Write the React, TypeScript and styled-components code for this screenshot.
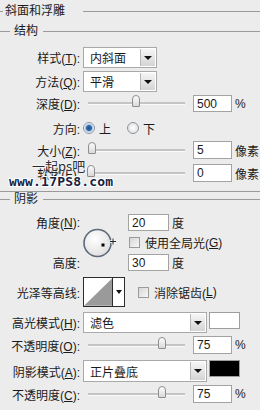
import React from 'react'
import styled, { createGlobalStyle } from 'styled-components'

const GlobalStyle = createGlobalStyle`
  html, body {
    margin: 0;
    padding: 0;
    background: #ececec;
  }
  body {
    font-family: 'Liberation Sans', 'Noto Sans CJK SC', sans-serif;
    font-size: 12px;
    color: #1a1a1a;
  }
`

const Panel = styled.div`
  position: relative;
  width: 260px;
  height: 410px;
  overflow: hidden;
  background: #ececec;
`

const Legend = styled.div<{ $h: number; $lead: number; $gap: number }>`
  display: flex;
  align-items: center;
  height: ${p => p.$h}px;
  line-height: 1;
  white-space: nowrap;
  &::before {
    content: '';
    width: ${p => p.$lead}px;
    border-top: 1px solid #9a9a9a;
    margin-right: ${p => (p.$lead > 5 ? 4 : 2)}px;
  }
  &::after {
    content: '';
    flex: 1;
    border-top: 1px solid #9a9a9a;
    margin-left: ${p => p.$gap}px;
  }
`

const Separator = styled.div`
  height: 18px;
  box-sizing: border-box;
  border-bottom: 1px solid #9a9a9a;
  margin-bottom: -8px;
  position: relative;
  top: -8px;
`

const Row = styled.div<{ $h: number; $mt: number }>`
  display: flex;
  align-items: center;
  height: ${p => p.$h}px;
  margin-top: ${p => p.$mt}px;
  white-space: nowrap;
`

const Label = styled.span`
  flex: none;
  width: 80px;
  margin-right: 3px;
  text-align: right;
`

const U = styled.span`
  text-decoration: underline;
`

const Select = styled.div<{ $w: number }>`
  display: flex;
  width: ${p => p.$w}px;
  height: 100%;
  box-sizing: border-box;
  border: 1px solid #a9a9a9;
  background: #fff;
`

const SelectText = styled.span`
  flex: 1;
  display: flex;
  align-items: center;
  padding-left: 6px;
`

const DropButton = styled.span`
  width: 14px;
  margin: 1px;
  border-left: 1px solid #b9b9b9;
  background: linear-gradient(#f6f6f6, #d4d4d4);
  display: flex;
  align-items: center;
  justify-content: center;
  &::after {
    content: '';
    border-left: 4px solid transparent;
    border-right: 4px solid transparent;
    border-top: 4px solid #111;
  }
`

const Swatch = styled.span<{ $color: string }>`
  align-self: flex-start;
  width: 31px;
  height: 17px;
  margin-left: 2px;
  box-sizing: border-box;
  border: 1px solid #9e9e9e;
  background: ${p => p.$color};
`

const NumBox = styled.span<{ $w?: number; $ml?: number }>`
  display: flex;
  align-items: center;
  width: ${p => p.$w ?? 39}px;
  height: 100%;
  margin-left: ${p => p.$ml ?? 0}px;
  padding-left: 3px;
  box-sizing: border-box;
  border: 1px solid #a3a3a3;
  background: #fff;
`

const Unit = styled.span`
  margin-left: 3px;
`

const Track = styled.div`
  position: relative;
  width: 97px;
  height: 2px;
  margin-left: 5px;
  margin-right: 8px;
  background: #c4c4c4;
  border-bottom: 1px solid #fafafa;
`

const Thumb = styled.span`
  position: absolute;
  top: -7px;
  width: 8px;
  height: 12px;
  margin-left: -4px;
  box-sizing: border-box;
  border: 1px solid #8e8e8e;
  border-radius: 4px 4px 1px 1px;
  background: linear-gradient(#fdfdfd, #d9d9d9);
`

const Radio = styled.span<{ $on?: boolean }>`
  width: 12px;
  height: 12px;
  border-radius: 50%;
  box-sizing: border-box;
  border: 1px solid #8a96a3;
  background: ${p =>
    p.$on
      ? 'radial-gradient(circle, #1f4f8a 0, #2f6bb0 2.5px, #a9c3e0 3.5px, #f4f6f8 5px)'
      : 'radial-gradient(circle, #ffffff 0, #e3e3e3 5px)'};
`

const RadioText = styled.span<{ $mr?: number }>`
  margin-left: 4px;
  margin-right: ${p => p.$mr ?? 0}px;
`

const Check = styled.span<{ $ml?: number }>`
  flex: none;
  width: 11px;
  height: 11px;
  margin-left: ${p => p.$ml ?? 0}px;
  margin-right: 5px;
  box-sizing: border-box;
  border: 1px solid #9b9b9b;
  background: linear-gradient(135deg, #d6d6d6, #f8f8f8);
`

const AngleGrid = styled.div`
  display: grid;
  grid-template-columns: 80px 42px auto;
  grid-template-rows: 17px 23px 17px;
  column-gap: 3px;
  margin-top: 8px;
  white-space: nowrap;
  & > span {
    display: flex;
    align-items: center;
  }
`

const GridLabel = styled.span`
  justify-content: flex-end;
`

const Dial = styled.div`
  grid-column: 2;
  grid-row: 1 / span 3;
  align-self: center;
  height: 30px;
`

const Contour = styled.div`
  display: flex;
  width: 42px;
  height: 100%;
  box-sizing: border-box;
  border: 1px solid #2b2b2b;
  background: #fff;
`

const ContourArrow = styled.span`
  width: 11px;
  border-left: 1px solid #2b2b2b;
  display: flex;
  align-items: center;
  justify-content: center;
  &::after {
    content: '';
    border-left: 3px solid transparent;
    border-right: 3px solid transparent;
    border-top: 4px solid #111;
  }
`

const Watermark = styled.div<{ $x: number; $y: number }>`
  position: absolute;
  left: ${p => p.$x}px;
  top: ${p => p.$y}px;
  white-space: nowrap;
  line-height: 1;
`

const MarkCn = styled.span`
  font-family: 'Noto Sans CJK SC', sans-serif;
  font-size: 13px;
  color: #2a2a2a;
  text-shadow: 0 0 2px #fff, 0 0 2px #fff;
`

const MarkUrl = styled.span`
  font-family: 'DejaVu Sans Mono', monospace;
  font-weight: bold;
  font-size: 13px;
  letter-spacing: 0.2px;
  color: #17223f;
  text-shadow: 1px 1px 0 #fff, -1px -1px 0 #fff, 1px -1px 0 #fff, -1px 1px 0 #fff;
`

const Slider = ({ pos }: { pos: number }) => (
  <Track>
    <Thumb style={{ left: `${pos}%` }} />
  </Track>
)

const App = () => {
  return (
    <Panel>
      <GlobalStyle />
      <Legend $h={22} $lead={3} $gap={18}>斜面和浮雕</Legend>
      <Legend $h={18} $lead={10} $gap={5}>结构</Legend>

      <Row $h={21} $mt={7}>
        <Label>样式(<U>T</U>):</Label>
        <Select $w={74}>
          <SelectText>内斜面</SelectText>
          <DropButton />
        </Select>
      </Row>
      <Row $h={21} $mt={3}>
        <Label>方法(<U>Q</U>):</Label>
        <Select $w={74}>
          <SelectText>平滑</SelectText>
          <DropButton />
        </Select>
      </Row>
      <Row $h={17} $mt={3}>
        <Label>深度(<U>D</U>):</Label>
        <Slider pos={49} />
        <NumBox>500</NumBox>
        <Unit>%</Unit>
      </Row>
      <Row $h={18} $mt={7}>
        <Label>方向:</Label>
        <Radio $on />
        <RadioText $mr={16}>上</RadioText>
        <Radio />
        <RadioText>下</RadioText>
      </Row>
      <Row $h={18} $mt={4}>
        <Label>大小(<U>Z</U>):</Label>
        <Slider pos={4} />
        <NumBox>5</NumBox>
        <Unit>像素</Unit>
      </Row>
      <Row $h={18} $mt={5}>
        <Label>软化(<U>F</U>):</Label>
        <Slider pos={3} />
        <NumBox>0</NumBox>
        <Unit>像素</Unit>
      </Row>
      <Separator />

      <Legend $h={14} $lead={10} $gap={5}>阴影</Legend>

      <AngleGrid>
        <GridLabel>角度(<U>N</U>):</GridLabel>
        <Dial>
          <svg width="36" height="30" viewBox="0 0 36 30">
            <defs>
              <radialGradient id="dialFill" cx="40%" cy="35%" r="70%">
                <stop offset="0" stopColor="#ffffff" />
                <stop offset="1" stopColor="#dedede" />
              </radialGradient>
            </defs>
            <circle cx="14.5" cy="15" r="13.5" fill="url(#dialFill)" stroke="#5d6878" strokeWidth="1.6" />
            <rect x="18.5" y="15.5" width="3" height="3" fill="#000" />
            <path d="M30 10.5v6M27 13.5h6" stroke="#fff" strokeWidth="2.6" />
            <path d="M30 10.5v6M27 13.5h6" stroke="#222" strokeWidth="1" />
          </svg>
        </Dial>
        <span>
          <NumBox $w={41} style={{ height: 17 }}>20</NumBox>
          <Unit>度</Unit>
        </span>
        <span style={{ gridColumn: 3 }}>
          <Check $ml={1} />
          使用全局光(<U>G</U>)
        </span>
        <GridLabel>高度:</GridLabel>
        <span style={{ gridColumn: 3 }}>
          <NumBox $w={41} style={{ height: 17 }}>30</NumBox>
          <Unit>度</Unit>
        </span>
      </AngleGrid>

      <Row $h={30} $mt={6}>
        <Label>光泽等高线:</Label>
        <Contour>
          <svg width="29" height="28" viewBox="0 0 29 28">
            <polygon points="0,28 29,0 29,28" fill="#9a9a9a" />
          </svg>
          <ContourArrow />
        </Contour>
        <Check $ml={13} />
        消除锯齿(<U>L</U>)
      </Row>

      <Row $h={21} $mt={5}>
        <Label>高光模式(<U>H</U>):</Label>
        <Select $w={124}>
          <SelectText>滤色</SelectText>
          <DropButton />
        </Select>
        <Swatch $color="#ffffff" />
      </Row>
      <Row $h={18} $mt={3}>
        <Label>不透明度(<U>O</U>):</Label>
        <Slider pos={76} />
        <NumBox>75</NumBox>
        <Unit>%</Unit>
      </Row>
      <Row $h={22} $mt={6}>
        <Label>阴影模式(<U>A</U>):</Label>
        <Select $w={124}>
          <SelectText>正片叠底</SelectText>
          <DropButton />
        </Select>
        <Swatch $color="#000000" />
      </Row>
      <Row $h={18} $mt={3}>
        <Label>不透明度(<U>C</U>):</Label>
        <Slider pos={76} />
        <NumBox>75</NumBox>
        <Unit>%</Unit>
      </Row>

      <Watermark $x={32} $y={159}>
        <MarkCn>一起ps吧</MarkCn>
      </Watermark>
      <Watermark $x={9} $y={175}>
        <MarkUrl>www.17PS8.com</MarkUrl>
      </Watermark>
    </Panel>
  )
}

export default App
